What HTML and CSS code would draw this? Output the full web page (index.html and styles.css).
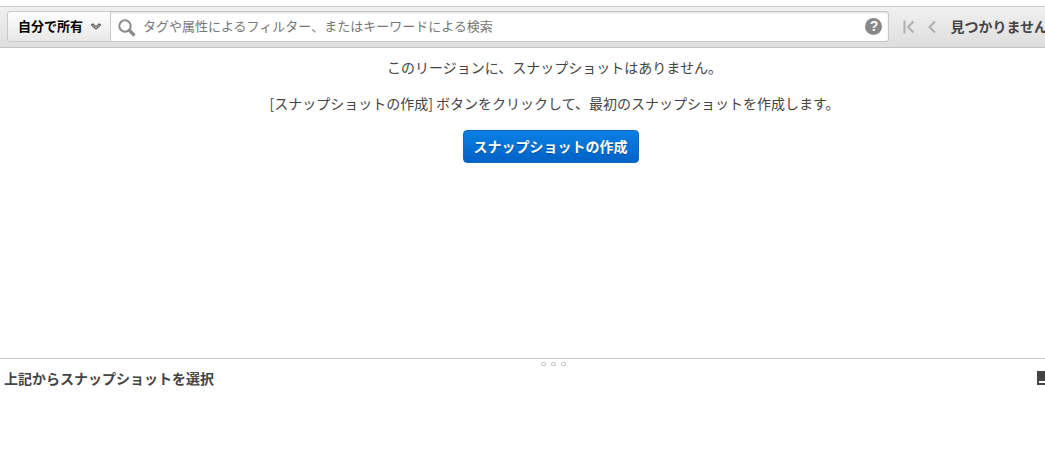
FILE: index.html
```html
<!DOCTYPE html>
<html lang="ja">
<head>
    <meta charset="UTF-8">
    <meta name="viewport" content="width=device-width, initial-scale=1.0">
    <title>スナップショット</title>
    <link rel="stylesheet" href="styles.css">
</head>
<body>
    <header class="toolbar">
        <form class="search" role="search">
            <div class="owner">
                <select class="owner-select" aria-label="所有者">
                    <option>自分で所有</option>
                </select>
                <svg class="owner-arrow" width="10" height="7" viewBox="0 0 10 7" aria-hidden="true">
                    <path d="M.6 1.4 2 .8l3 2.7L8 .8l1.4.6v1L5 6.3.6 2.4z" fill="#aaa" stroke="#333" stroke-width=".9"/>
                </svg>
            </div>
            <svg class="search-icon" width="18" height="18" viewBox="0 0 18 18" aria-hidden="true">
                <circle cx="7" cy="7" r="5.700" fill="none" stroke="#8c8c8c" stroke-width="2"/>
                <path d="M11 11l5.500 5.500" stroke="#8c8c8c" stroke-width="3.2"/>
            </svg>
            <input class="search-input" type="text" aria-label="検索" placeholder="タグや属性によるフィルター、またはキーワードによる検索">
            <button class="help" type="button" aria-label="ヘルプ">?</button>
        </form>
        <nav class="pager">
            <button class="pager-button" type="button" aria-label="最初のページ" disabled>
                <svg width="12" height="14" viewBox="0 0 12 14">
                    <path d="M1.5 .5v13M10.5 1.5 5 7l5.500 5.500" fill="none" stroke="#b0b0b0" stroke-width="2"/>
                </svg>
            </button>
            <button class="pager-button" type="button" aria-label="前のページ" disabled>
                <svg width="8" height="14" viewBox="0 0 8 14">
                    <path d="M7 1.500 1.500 7 7 12.500" fill="none" stroke="#b0b0b0" stroke-width="2"/>
                </svg>
            </button>
            <span class="pager-status">見つかりません</span>
        </nav>
    </header>

    <main class="empty">
        <p>このリージョンに、スナップショットはありません。</p>
        <p>[スナップショットの作成] ボタンをクリックして、最初のスナップショットを作成します。</p>
        <button class="create-button" type="button">スナップショットの作成</button>
    </main>

    <section class="details">
        <div class="grip">
            <span class="grip-dot"></span>
            <span class="grip-dot"></span>
            <span class="grip-dot"></span>
        </div>
        <div class="details-header">
            <h2>上記からスナップショットを選択</h2>
            <button class="panel-size" type="button" aria-label="パネルを縮小">
                <svg width="8" height="14" viewBox="0 0 8 14">
                    <path d="M0 0h8v14H0z" fill="#444"/>
                    <path d="M2 10h6v2H2z" fill="#fff"/>
                </svg>
            </button>
        </div>
    </section>
</body>
</html>
```
FILE: styles.css
```css
* {
    box-sizing: border-box;
    margin: 0;
    padding: 0;
}

body {
    display: flex;
    flex-direction: column;
    min-height: 100vh;
    padding-top: 6px;
    overflow-x: hidden;
    background-color: #fff;
    color: #444;
    font-family: "Noto Sans CJK JP", sans-serif;
    font-size: 14px;
    line-height: 20px;
}

button,
input,
select {
    border: none;
    background: none;
    font-family: inherit;
}

.toolbar {
    display: flex;
    align-items: center;
    gap: 14px;
    padding: 4px 0 5px 7px;
    border-top: 1px solid #ccc;
    border-bottom: 1px solid #c4c4c4;
    background: linear-gradient(#f0f0f0, #dedede);
}

/* search box */
.search {
    display: flex;
    flex: 1;
    align-items: center;
    height: 31px;
    border: 1px solid #c8c8c8;
    border-radius: 3px;
    background-color: #fff;
    box-shadow: inset 0 1px 2px #ddd;
}

.owner {
    display: flex;
    align-items: center;
    height: 100%;
    padding-right: 9px;
    border-right: 1px solid #c8c8c8;
    border-radius: 3px 0 0 3px;
    background: linear-gradient(#fff, #e8e8e8);
}

.owner-select {
    width: 83px;
    margin-right: -10px;
    padding: 0 0 2px 10px;
    appearance: none;
    box-sizing: content-box;
    color: #000;
    font-size: 13px;
    font-weight: bold;
}

.owner-arrow {
    flex: none;
    pointer-events: none;
}

.search-icon {
    flex: none;
    margin: 2px 7px 0;
}

.search-input {
    flex: 1;
    min-width: 0;
    height: 100%;
    padding-bottom: 2px;
    color: #444;
    font-size: 13px;
    outline: none;
}

.search-input::placeholder {
    color: #777;
}

.help {
    width: 17px;
    height: 17px;
    margin-right: 6px;
    border-radius: 50%;
    background-color: #888;
    color: #fff;
    font-family: "Liberation Sans", sans-serif;
    font-size: 14px;
    font-weight: bold;
    line-height: 17px;
}

/* paging */
.pager {
    display: flex;
    flex: none;
    align-items: center;
    gap: 13px;
    margin-right: -3px;
}

.pager-button {
    display: flex;
}

.pager-status {
    margin-left: 1px;
    padding-bottom: 2px;
    font-weight: bold;
    white-space: nowrap;
}

/* empty list */
.empty {
    display: flex;
    flex: 1;
    flex-direction: column;
    align-items: center;
    gap: 16px;
    padding: 9px 0 16px 64px;
}

.create-button {
    height: 33px;
    margin: 1px 8px 0 0;
    padding: 0 10px 2px;
    border: 1px solid #1166bb;
    border-radius: 4px;
    background: linear-gradient(#0a80e4, #0062c8);
    color: #fff;
    font-size: 14px;
    font-weight: bold;
    text-shadow: 0 1px 1px #004a99;
    cursor: pointer;
}

/* details panel */
.details {
    min-height: 110px;
    border-top: 1px solid #c8c8c8;
}

.grip {
    display: flex;
    justify-content: center;
    gap: 5px;
    padding: 3px 0 2px 62px;
}

.grip-dot {
    width: 5px;
    height: 4px;
    border: 1px solid #c8c8c8;
    border-radius: 2px 2px 0 0;
}

.details-header {
    display: flex;
    align-items: center;
    justify-content: space-between;
    padding-left: 4px;
}

.details-header h2 {
    font-size: 14px;
}

.panel-size {
    display: flex;
}
```
